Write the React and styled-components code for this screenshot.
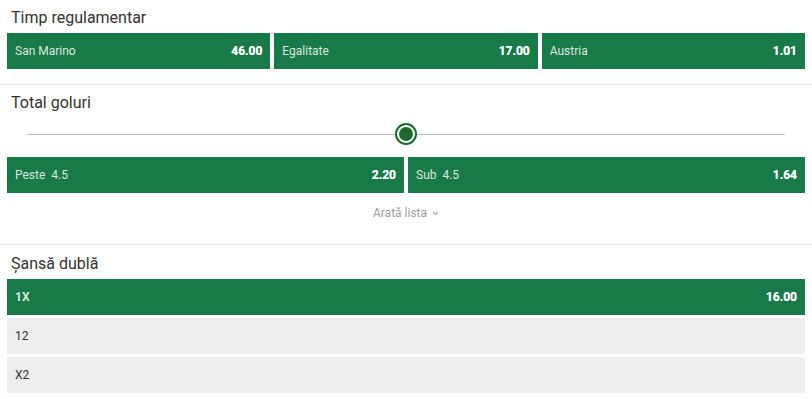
import React from "react";
import styled, { createGlobalStyle } from "styled-components";

const Global = createGlobalStyle`
  html, body { margin: 0; padding: 0; background: #fff; }
  body { font-family: Roboto, "Liberation Sans", Arial, sans-serif; }
`;

const Page = styled.div`
  width: 812px;
  display: flex;
  flex-direction: column;
`;

const Section = styled.section`
  padding: ${(p) => p.$pad || "8px 7px 15px"};
  border-bottom: ${(p) => (p.$last ? "none" : "1px solid #e3e3e3")};
  display: flex;
  flex-direction: column;
`;

const Title = styled.h2`
  margin: 0 0 6px 4px;
  font-size: 16px;
  font-weight: 400;
  line-height: 19px;
  color: #333;
`;

const Row = styled.div`
  display: grid;
  grid-template-columns: repeat(${(p) => p.$cols}, 1fr);
  gap: 4px;
`;

const Odd = styled.div`
  height: 36px;
  box-sizing: border-box;
  padding: 0 8px 0 8px;
  display: flex;
  align-items: center;
  justify-content: space-between;
  background: ${(p) => (p.$active ? "#187a48" : "#eeeeee")};
  color: ${(p) => (p.$active ? "#fff" : "#333")};
  font-size: 12px;
`;

const Label = styled.span`
  color: ${(p) => (p.$light ? "rgba(255,255,255,0.85)" : "#333")};
  font-weight: ${(p) => (p.$bold ? 700 : 400)};
  white-space: pre;
`;

const Price = styled.span`
  font-weight: 700;
  font-size: 12px;
  color: #fff;
  text-shadow: 0 0 0.4px #fff;
`;

const SliderWrap = styled.div`
  position: relative;
  height: 22px;
  margin: 5px 20px 12px;
  display: flex;
  align-items: center;
`;

const Track = styled.div`
  flex: 1;
  height: 1px;
  background: #bdbdbd;
`;

const Thumb = styled.div`
  position: absolute;
  top: 0;
  left: 50%;
  transform: translateX(-50%);
  width: 22px;
  height: 22px;
  box-sizing: border-box;
  border-radius: 50%;
  border: 2px solid #1d6a2b;
  background: #fff;
  display: flex;
  align-items: center;
  justify-content: center;
  &::after {
    content: "";
    width: 14px;
    height: 14px;
    border-radius: 50%;
    background: #1d6a2b;
  }
`;

const ShowList = styled.div`
  margin-top: 13px;
  display: flex;
  justify-content: center;
  align-items: center;
  gap: 5px;
  font-size: 12px;
  color: #9e9e9e;
  line-height: 14px;
`;

const Stack = styled.div`
  display: flex;
  flex-direction: column;
  gap: 3px;
`;

export default function App() {
  return (
    <Page>
      <Global />
      <Section>
        <Title>Timp regulamentar</Title>
        <Row $cols={3}>
          <Odd $active>
            <Label $light>San Marino</Label>
            <Price>46.00</Price>
          </Odd>
          <Odd $active>
            <Label $light>Egalitate</Label>
            <Price>17.00</Price>
          </Odd>
          <Odd $active>
            <Label $light>Austria</Label>
            <Price>1.01</Price>
          </Odd>
        </Row>
      </Section>
      <Section $pad="8px 7px 24px">
        <Title>Total goluri</Title>
        <SliderWrap>
          <Track />
          <Thumb />
        </SliderWrap>
        <Row $cols={2}>
          <Odd $active>
            <Label $light>{"Peste  4.5"}</Label>
            <Price>2.20</Price>
          </Odd>
          <Odd $active>
            <Label $light>{"Sub  4.5"}</Label>
            <Price>1.64</Price>
          </Odd>
        </Row>
        <ShowList>
          Arată lista
          <svg width="7" height="5" viewBox="0 0 7 5">
            <path d="M1 1.2 L3.5 3.6 L6 1.2" fill="none" stroke="#9e9e9e" strokeWidth="1.1" />
          </svg>
        </ShowList>
      </Section>
      <Section $last $pad="9px 7px 7px">
        <Title>Șansă dublă</Title>
        <Stack>
          <Odd $active>
            <Label $light $bold>1X</Label>
            <Price>16.00</Price>
          </Odd>
          <Odd>
            <Label>12</Label>
          </Odd>
          <Odd>
            <Label>X2</Label>
          </Odd>
        </Stack>
      </Section>
    </Page>
  );
}
